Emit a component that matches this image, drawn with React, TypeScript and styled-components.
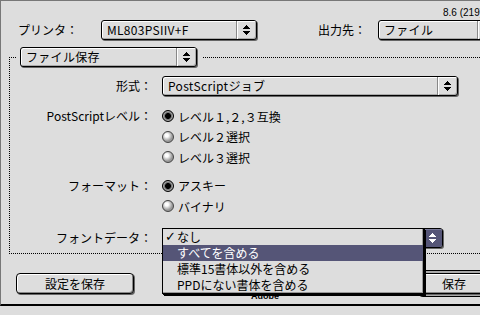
import React from 'react';
import styled, { createGlobalStyle } from 'styled-components';

const HILITE = '#555577';
const FACE = '#dddddd';

const GlobalStyle = createGlobalStyle`
    html, body {
        margin: 0;
        padding: 0;
        background: ${FACE};
        overflow: hidden;
    }
    body {
        font-family: "Noto Sans CJK JP", "Liberation Sans", sans-serif;
        font-size: 12px;
        color: #000;
    }
`;

const Window = styled.div`
    width: 520px;
    height: 306px;
    box-sizing: border-box;
    border-top: 1px solid #777;
    border-left: 1px solid #777;
    border-bottom: 2px solid #000;
    background: ${FACE};
    display: flex;
    flex-direction: column;
`;

const VersionLine = styled.div`
    margin-top: 6px;
    padding-left: 442px;
    height: 11px;
    line-height: 11px;
    font-family: "Liberation Sans", sans-serif;
    font-size: 10px;
    white-space: nowrap;
`;

const TopRow = styled.div`
    display: flex;
    align-items: center;
    margin-top: 2px;
    padding-left: 17px;
`;

type LabelProps = {
    $w: number;
    $gap?: number;
};

const TopLabel = styled.div<LabelProps>`
    width: ${(p) => p.$w}px;
    margin-left: ${(p) => p.$gap || 0}px;
    line-height: 20px;
    white-space: nowrap;
`;

const PopupBox = styled.div<{ $w: number }>`
    position: relative;
    display: flex;
    width: ${(p) => p.$w}px;
    height: 20px;
    box-sizing: border-box;
    border: 1px solid #000;
    border-radius: 3px;
    background: ${FACE};
    box-shadow: 1px 1px 0 #666, inset 1px 1px 0 #fff, inset -1px -1px 0 #aaa;
`;

const PopupText = styled.div`
    flex: 1;
    padding-left: 5px;
    line-height: 18px;
    letter-spacing: 0.3px;
    white-space: nowrap;
    overflow: hidden;
    border-right: 1px solid #888;
`;

const PopupArrow = styled.div<{ $active?: boolean }>`
    width: 19px;
    display: flex;
    align-items: center;
    justify-content: center;
    border-radius: 0 2px 2px 0;
    background: ${(p) => (p.$active ? HILITE : 'transparent')};
    box-shadow: inset 1px 1px 0 ${(p) => (p.$active ? '#7a7a99' : '#fff')};
`;

const Group = styled.fieldset`
    margin: 7px 8px 0 8px;
    padding: 0 0 5px 0;
    border: 1px dotted #000;
    min-width: 0;
`;

const Legend = styled.legend`
    margin-left: 6px;
    padding: 0 6px 0 4px;
`;

const Row = styled.div<{ $top: number }>`
    display: flex;
    align-items: flex-start;
    margin-top: ${(p) => p.$top}px;
`;

const FieldLabel = styled.div<{ $lh?: number }>`
    width: 142px;
    margin-right: 10px;
    text-align: right;
    line-height: ${(p) => p.$lh || 20}px;
    white-space: nowrap;
`;

const RadioList = styled.div`
    display: flex;
    flex-direction: column;
`;

const RadioLine = styled.div`
    display: flex;
    align-items: center;
    height: 20.5px;
    white-space: nowrap;
`;

const RadioDot = styled.span<{ $on?: boolean }>`
    width: 12px;
    height: 12px;
    box-sizing: border-box;
    border-radius: 50%;
    margin-right: 4px;
    border: 1px solid ${(p) => (p.$on ? '#000' : '#444')};
    background: ${(p) =>
        p.$on
            ? 'radial-gradient(circle at 50% 50%, #000 0 2.6px, #666 3.2px, #aaa 4.6px, #888 5px)'
            : 'radial-gradient(circle at 38% 35%, #fff 0 1.5px, #d8d8d8 3px, #999 5.5px)'};
`;

const MenuAnchor = styled.div`
    position: relative;
`;

const Menu = styled.ul`
    position: absolute;
    left: 0;
    top: 0;
    width: 260px;
    margin: 0;
    padding: 0;
    list-style: none;
    background: ${FACE};
    border: 1px solid #000;
    box-shadow: inset -1px -1px 0 #999, 1px 1px 0 #000, 2px 2px 0 #000;
    z-index: 2;
`;

const MenuItem = styled.li<{ $hi?: boolean }>`
    position: relative;
    height: 16px;
    line-height: 16px;
    padding-left: 14px;
    white-space: nowrap;
    background: ${(p) => (p.$hi ? HILITE : 'transparent')};
    color: ${(p) => (p.$hi ? '#fff' : '#000')};
`;

const Check = styled.span`
    position: absolute;
    left: 2px;
    top: 0;
    font-family: "DejaVu Sans", sans-serif;
    font-size: 13px;
    font-weight: bold;
`;

const BottomRow = styled.div`
    display: flex;
    align-items: center;
    margin-top: 16px;
    padding-left: 15px;
`;

const Button = styled.div<{ $w: number }>`
    width: ${(p) => p.$w}px;
    height: 21px;
    box-sizing: border-box;
    border: 1px solid #000;
    border-radius: 4px;
    background: ${FACE};
    box-shadow: inset 1px 1px 0 #fff, inset -1px -1px 0 #888, 1px 1px 0 #666;
    text-align: center;
    line-height: 19px;
    white-space: nowrap;
`;

const DefaultRing = styled.div`
    padding: 2px;
    border: 1px solid #000;
    border-radius: 6px;
    background: #aaa;
`;

const Maker = styled.div`
    width: 283px;
    box-sizing: border-box;
    align-self: flex-end;
    padding-left: 117px;
    margin-bottom: -4px;
    font-family: "Liberation Sans", sans-serif;
    font-size: 9px;
    font-weight: bold;
    line-height: 10px;
`;

const Arrows: React.FC<{ color: string }> = ({ color }) => (
    <svg width="7" height="10" viewBox="0 0 7 10" shapeRendering="crispEdges">
        <rect x="3" y="0" width="1" height="1" fill={color} />
        <rect x="2" y="1" width="3" height="1" fill={color} />
        <rect x="1" y="2" width="5" height="1" fill={color} />
        <rect x="0" y="3" width="7" height="1" fill={color} />
        <rect x="0" y="6" width="7" height="1" fill={color} />
        <rect x="1" y="7" width="5" height="1" fill={color} />
        <rect x="2" y="8" width="3" height="1" fill={color} />
        <rect x="3" y="9" width="1" height="1" fill={color} />
    </svg>
);

interface PopupProps {
    width: number;
    value: string;
    open?: boolean;
}

// an open pop-up hides its own text behind the menu
const Popup: React.FC<PopupProps> = ({ width, value, open }) => (
    <PopupBox $w={width}>
        <PopupText>{open ? '' : value}</PopupText>
        <PopupArrow $active={open}>
            <Arrows color={open ? '#fff' : '#000'} />
        </PopupArrow>
    </PopupBox>
);

const fontOptions = ['なし', 'すべてを含める', '標準15書体以外を含める', 'PPDにない書体を含める'];

const App: React.FC = () => {
    return (
        <>
            <GlobalStyle />
            <Window>
                <VersionLine>8.6 (219)</VersionLine>

                <TopRow>
                    <TopLabel $w={83}>プリンタ：</TopLabel>
                    <Popup width={156} value="ML803PSIIV+F" />
                    <TopLabel $w={60} $gap={61}>出力先：</TopLabel>
                    <Popup width={120} value="ファイル" />
                </TopRow>

                <Group>
                    <Legend>
                        <Popup width={177} value="ファイル保存" />
                    </Legend>

                    <Row $top={9}>
                        <FieldLabel>形式：</FieldLabel>
                        <Popup width={296} value="PostScriptジョブ" />
                    </Row>

                    <Row $top={10}>
                        <FieldLabel $lh={20.5}>PostScriptレベル：</FieldLabel>
                        <RadioList>
                            <RadioLine><RadioDot $on />レベル１,２,３互換</RadioLine>
                            <RadioLine><RadioDot />レベル２選択</RadioLine>
                            <RadioLine><RadioDot />レベル３選択</RadioLine>
                        </RadioList>
                    </Row>

                    <Row $top={8}>
                        <FieldLabel $lh={20.5}>フォーマット：</FieldLabel>
                        <RadioList>
                            <RadioLine><RadioDot $on />アスキー</RadioLine>
                            <RadioLine><RadioDot />バイナリ</RadioLine>
                        </RadioList>
                    </Row>

                    <Row $top={11.5}>
                        <FieldLabel>フォントデータ：</FieldLabel>
                        <MenuAnchor>
                            <Popup width={281} value="なし" open />
                            <Menu>
                                {fontOptions.map((label, i) => (
                                    <MenuItem key={label} $hi={i === 1}>
                                        {i === 0 && <Check>✓</Check>}
                                        {label}
                                    </MenuItem>
                                ))}
                            </Menu>
                        </MenuAnchor>
                    </Row>
                </Group>

                <BottomRow>
                    <Button $w={118}>設定を保存</Button>
                    <Maker>Adobe</Maker>
                    <DefaultRing>
                        <Button $w={68}>保存</Button>
                    </DefaultRing>
                </BottomRow>
            </Window>
        </>
    );
};

export default App;
